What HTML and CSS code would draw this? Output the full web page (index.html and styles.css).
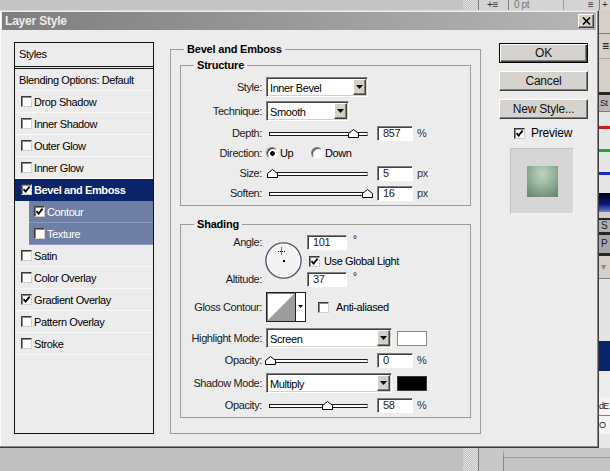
FILE: index.html
```html
<!DOCTYPE html>
<html lang="en">
<head>
<meta charset="utf-8">
<title>Layer Style</title>
<link rel="stylesheet" href="styles.css">
</head>
<body>
<div class="screen">
  <div class="topstrip">
    <div class="ts-left"></div>
    <div class="ts-hatch"></div>
    <div class="ts-right">
      <span class="ts-ic">+≡</span>
      <span class="ts-field">0 pt</span>
      <span class="ts-ic2">≡</span>
      <span class="ts-plus">+</span>
    </div>
  </div>

  <div class="middle">
    <div class="dialog">
      <div class="titlebar">
        <span class="title">Layer Style</span>
        <span class="close"><svg width="9" height="8" viewBox="0 0 9 8"><path d="M1 0.5 L8 7.5 M8 0.5 L1 7.5" stroke="#000" stroke-width="1.6"/></svg></span>
      </div>

      <div class="dbody">
        <div class="stylelist">
          <div class="sl-head">Styles</div>
          <div class="sl-row plain">Blending Options: Default</div>
          <div class="sl-row"><span class="cb"></span>Drop Shadow</div>
          <div class="sl-row"><span class="cb"></span>Inner Shadow</div>
          <div class="sl-row"><span class="cb"></span>Outer Glow</div>
          <div class="sl-row"><span class="cb"></span>Inner Glow</div>
          <div class="sl-row selected"><span class="cb"><svg viewBox="0 0 9 9"><polyline points="1.5,4.2 3.6,6.6 7.6,1.6" fill="none" stroke="#000" stroke-width="1.8"/></svg></span>Bevel and Emboss</div>
          <div class="sl-row sub"><span class="cb"><svg viewBox="0 0 9 9"><polyline points="1.5,4.2 3.6,6.6 7.6,1.6" fill="none" stroke="#000" stroke-width="1.8"/></svg></span>Contour</div>
          <div class="sl-row sub"><span class="cb"></span>Texture</div>
          <div class="sl-row"><span class="cb"></span>Satin</div>
          <div class="sl-row"><span class="cb"></span>Color Overlay</div>
          <div class="sl-row"><span class="cb"><svg viewBox="0 0 9 9"><polyline points="1.5,4.2 3.6,6.6 7.6,1.6" fill="none" stroke="#000" stroke-width="1.8"/></svg></span>Gradient Overlay</div>
          <div class="sl-row"><span class="cb"></span>Pattern Overlay</div>
          <div class="sl-row"><span class="cb"></span>Stroke</div>
        </div>

        <fieldset class="outer">
          <legend>Bevel and Emboss</legend>

          <fieldset class="inner structure">
            <legend>Structure</legend>
            <div class="rows">
              <div class="row r20">
                <span class="lbl">Style:</span>
                <div class="select w-style"><span class="sel-text">Inner Bevel</span><span class="arrow"><svg width="7" height="4" viewBox="0 0 7 4"><polygon points="0,0 7,0 3.5,4" fill="#000"/></svg></span></div>
              </div>
              <div class="row r20">
                <span class="lbl">Technique:</span>
                <div class="select w-tech"><span class="sel-text">Smooth</span><span class="arrow"><svg width="7" height="4" viewBox="0 0 7 4"><polygon points="0,0 7,0 3.5,4" fill="#000"/></svg></span></div>
              </div>
              <div class="row r16">
                <span class="lbl">Depth:</span>
                <div class="slider"><div class="track"></div><svg class="thumb" style="left:82px" width="11" height="9" viewBox="0 0 11 9"><polygon points="0.5,8.5 0.5,4.5 5.5,0.5 10.5,4.5 10.5,8.5" fill="#fff" stroke="#000"/></svg></div>
                <span class="num">857</span><span class="unit">%</span>
              </div>
              <div class="row r16">
                <span class="lbl">Direction:</span>
                <span class="opt opt-up"><span class="radio on"></span>Up</span>
                <span class="opt"><span class="radio"></span>Down</span>
              </div>
              <div class="row r16">
                <span class="lbl">Size:</span>
                <div class="slider"><div class="track"></div><svg class="thumb" style="left:1px" width="11" height="9" viewBox="0 0 11 9"><polygon points="0.5,8.5 0.5,4.5 5.5,0.5 10.5,4.5 10.5,8.5" fill="#fff" stroke="#000"/></svg></div>
                <span class="num">5</span><span class="unit">px</span>
              </div>
              <div class="row r16">
                <span class="lbl">Soften:</span>
                <div class="slider"><div class="track"></div><svg class="thumb" style="left:96px" width="11" height="9" viewBox="0 0 11 9"><polygon points="0.5,8.5 0.5,4.5 5.5,0.5 10.5,4.5 10.5,8.5" fill="#fff" stroke="#000"/></svg></div>
                <span class="num">16</span><span class="unit">px</span>
              </div>
            </div>
          </fieldset>

          <fieldset class="inner shading">
            <legend>Shading</legend>
            <div class="angle-block">
              <div class="lblcol"><span>Angle:</span><span>Altitude:</span></div>
              <svg class="dial" width="37" height="37" viewBox="0 0 37 37">
                <circle cx="18.5" cy="18.5" r="17.6" fill="#f3f3f3" stroke="#4d5a6b" stroke-width="1.4"/>
                <circle cx="18.5" cy="18.5" r="16.2" fill="none" stroke="#ffffff" stroke-width="1"/>
                <g stroke="#000" stroke-width="1" stroke-dasharray="1 1">
                  <line x1="16.5" y1="5.5" x2="16.5" y2="12.5"/>
                  <line x1="13" y1="9.5" x2="20" y2="9.5"/>
                </g>
                <rect x="18" y="18" width="2" height="2" fill="#000"/>
              </svg>
              <div class="anglecol">
                <div class="arow"><span class="num w40">101</span><span class="deg">°</span></div>
                <div class="arow grow"><span class="cb gl"><svg viewBox="0 0 9 9"><polyline points="1.5,4.2 3.6,6.6 7.6,1.6" fill="none" stroke="#000" stroke-width="1.8"/></svg></span>Use Global Light</div>
                <div class="arow"><span class="num w40">37</span><span class="deg">°</span></div>
              </div>
            </div>

            <div class="row r30 mt5">
              <span class="lbl">Gloss Contour:</span>
              <svg class="contour" width="40" height="30" viewBox="0 0 40 30">
                <rect x="0" y="0" width="40" height="30" fill="#fff"/>
                <polygon points="1,29 29,1 29,29" fill="#9c9c9c"/>
                <rect x="0.5" y="0.5" width="39" height="29" fill="none" stroke="#1e1e1e"/>
                <line x1="1" y1="1.5" x2="29" y2="1.5" stroke="#808080"/>
                <line x1="1.5" y1="1" x2="1.5" y2="29" stroke="#808080"/>
                <line x1="29.5" y1="0" x2="29.5" y2="30" stroke="#1e1e1e"/>
                <polygon points="32,13 37,13 34.5,16" fill="#000"/>
              </svg>
              <span class="cb aa"></span><span>Anti-aliased</span>
            </div>

            <div class="row r20 mt6">
              <span class="lbl">Highlight Mode:</span>
              <div class="select w-mode"><span class="sel-text">Screen</span><span class="arrow"><svg width="7" height="4" viewBox="0 0 7 4"><polygon points="0,0 7,0 3.5,4" fill="#000"/></svg></span></div>
              <span class="swatch white"></span>
            </div>
            <div class="row r16 mt4">
              <span class="lbl">Opacity:</span>
              <div class="slider"><div class="track"></div><svg class="thumb" style="left:-1px" width="11" height="9" viewBox="0 0 11 9"><polygon points="0.5,8.5 0.5,4.5 5.5,0.5 10.5,4.5 10.5,8.5" fill="#fff" stroke="#000"/></svg></div>
              <span class="num">0</span><span class="unit">%</span>
            </div>
            <div class="row r20 mt5">
              <span class="lbl">Shadow Mode:</span>
              <div class="select w-mode"><span class="sel-text">Multiply</span><span class="arrow"><svg width="7" height="4" viewBox="0 0 7 4"><polygon points="0,0 7,0 3.5,4" fill="#000"/></svg></span></div>
              <span class="swatch black"></span>
            </div>
            <div class="row r16 mt4">
              <span class="lbl">Opacity:</span>
              <div class="slider"><div class="track"></div><svg class="thumb" style="left:56px" width="11" height="9" viewBox="0 0 11 9"><polygon points="0.5,8.5 0.5,4.5 5.5,0.5 10.5,4.5 10.5,8.5" fill="#fff" stroke="#000"/></svg></div>
              <span class="num">58</span><span class="unit">%</span>
            </div>
          </fieldset>
        </fieldset>

        <div class="actions">
          <div class="btn default">OK</div>
          <div class="btn">Cancel</div>
          <div class="btn">New Style...</div>
          <div class="preview-row"><span class="cb pv"><svg viewBox="0 0 9 9"><polyline points="1.5,4.2 3.6,6.6 7.6,1.6" fill="none" stroke="#000" stroke-width="1.8"/></svg></span>Preview</div>
          <div class="preview-box"><div class="preview-sq"></div></div>
        </div>
      </div>
    </div>

    <div class="sidestrip">
      <div class="ss b23"></div>
      <div class="ss line"></div>
      <div class="ss b24 ic">≡</div>
      <div class="ss line2"></div>
      <div class="ss b33"></div>
      <div class="ss dark3"></div>
      <div class="ss tab16">St</div>
      <div class="ss line"></div>
      <div class="ss b14"></div>
      <div class="ss red"></div>
      <div class="ss b20"></div>
      <div class="ss green"></div>
      <div class="ss b20"></div>
      <div class="ss blue"></div>
      <div class="ss b18"></div>
      <div class="ss grad"></div>
      <div class="ss b6"></div>
      <div class="ss dark2"></div>
      <div class="ss tab12">S</div>
      <div class="ss dark3"></div>
      <div class="ss tab18">P</div>
      <div class="ss dark3"></div>
      <div class="ss b22 dd">▾</div>
      <div class="ss line"></div>
      <div class="ss b62"></div>
      <div class="ss navy"></div>
      <div class="ss b26"></div>
      <div class="ss txt">dE</div>
      <div class="ss line"></div>
      <div class="ss txt">O</div>
      <div class="ss rest"></div>
    </div>
  </div>

  <div class="bottomstrip">
    <div class="bs-left"></div>
    <div class="bs-hatch"></div>
    <div class="bs-mid"></div>
    <div class="bs-right"></div>
  </div>
</div>
</body>
</html>
```

FILE: styles.css
```css
* { box-sizing: border-box; }
html, body { margin: 0; padding: 0; }
body {
  width: 610px;
  height: 471px;
  overflow: hidden;
  background: #c0c0c0;
  font-family: "Liberation Sans", Arial, sans-serif;
  font-size: 11px;
  letter-spacing: -0.4px;
  color: #000;
}
.screen { width: 610px; height: 471px; display: flex; flex-direction: column; }

/* top strip */
.topstrip { height: 10px; display: flex; background: #c4c4c4; overflow: hidden; flex: none; }
.ts-left { width: 463px; }
.ts-hatch {
  width: 15px;
  background: repeating-conic-gradient(#e6e6e6 0 25%, #bdbdbd 0 50%) 0 0 / 2px 2px;
}
.ts-right {
  flex: 1; display: flex; align-items: flex-start; background: #d4d4d4;
  border-left: 1px solid #7a7a7a; font-size: 10px; line-height: 9px; color: #333;
}
.ts-ic { margin-left: 8px; width: 22px; border-right: 1px solid #808080; height: 10px; }
.ts-field { margin-left: 5px; width: 50px; color: #777; border-right: 1px solid #a0a0a0; height: 10px; }
.ts-ic2 { margin-left: 24px; width: 12px; border-right: 1px solid #808080; height: 10px; }
.ts-plus { margin-left: 2px; }

/* middle */
.middle { height: 438px; display: flex; flex: none; }
.dialog {
  width: 599px;
  height: 438px;
  display: flex;
  flex-direction: column;
  background: #ececec;
  border-top: 1px solid #dcdcdc;
  border-right: 1px solid #3c3c3c;
  border-bottom: 1px solid #3c3c3c;
  box-shadow: inset -1px -1px 0 #8a8a8a, inset 1px 0 0 #ffffff;
}
.titlebar {
  height: 18px;
  margin: 1px 2px 0 2px;
  background: linear-gradient(to right, #7e7e7e, #9a9a9a 50%, #b6b6b6);
  display: flex;
  align-items: center;
  justify-content: space-between;
  flex: none;
}
.title {
  color: #ececec;
  font-weight: bold;
  font-size: 12px;
  letter-spacing: -0.2px;
  margin-left: 3px;
}
.close {
  width: 16px; height: 14px; margin-right: 2px;
  background: #d4d0c8;
  border: 1px solid; border-color: #ffffff #404040 #404040 #ffffff;
  box-shadow: inset -1px -1px 0 #808080;
  display: flex; align-items: center; justify-content: center;
}
.close svg { display: block; }

.dbody {
  flex: 1;
  display: flex;
  align-items: stretch;
  padding: 12px 0 13px 14px;
}

/* style list */
.stylelist {
  width: 140px;
  flex: none;
  border: 1px solid #141414;
  background: #ececec;
}
.sl-head {
  height: 26px;
  padding: 0 0 0 4px;
  line-height: 23px;
  border-bottom: 3px double #141414;
}
.sl-row {
  height: 22px;
  display: flex;
  align-items: center;
  padding-left: 6px;
  border-bottom: 1px solid #f9f9f9;
  white-space: nowrap;
}
.sl-row.plain { padding-left: 4px; }
.sl-row.selected { background: #0a246a; color: #fff; font-weight: bold; border-bottom-color: #0a246a; }
.sl-row.sub { margin-left: 14px; padding-left: 5px; background: #6e7fa6; color: #fff; border-bottom-color: #8d9bbb; }

.cb {
  width: 11px; height: 11px; flex: none;
  background: #fff;
  border: 1px solid; border-color: #3a3a3a #d4d0c8 #d4d0c8 #3a3a3a;
  box-shadow: inset 1px 1px 0 #8a8a8a;
  margin-right: 2px;
  display: inline-flex; align-items: center; justify-content: center;
}
.cb svg { width: 9px; height: 9px; display: block; }

/* fieldsets */
fieldset { margin: 0; padding: 0; border: 1px solid #9c9c9c; min-width: 0; }
legend {
  padding: 0 3px;
  margin-left: 13px;
  font-weight: bold;
  line-height: 14px;
  letter-spacing: -0.2px;
}
.outer { width: 311px; flex: none; margin-left: 16px; }
.inner { margin: 2px 9px 0 9px; }
.structure { padding: 5px 0 4px 0; }
.shading { margin-top: 11px; padding: 4px 0 4px 0; }

.rows { display: flex; flex-direction: column; gap: 4px; }
.row { display: flex; align-items: center; white-space: nowrap; }
.r20 { height: 20px; }
.r16 { height: 16px; }
.r30 { height: 30px; }
.mt4 { margin-top: 4px; }
.mt5 { margin-top: 5px; }
.mt6 { margin-top: 6px; }

.lbl { width: 81px; flex: none; text-align: right; margin-right: 4px; color: #1a1a1a; }

/* select */
.select {
  height: 20px;
  display: flex; align-items: center; justify-content: space-between;
  background: #fff;
  border: 1px solid; border-color: #808080 #ffffff #ffffff #808080;
  box-shadow: inset 1px 1px 0 #404040, inset -1px -1px 0 #d4d0c8;
  flex: none;
}
.w-style { width: 102px; }
.w-tech { width: 83px; }
.w-mode { width: 126px; }
.sel-text { padding-left: 3px; margin-top: 2px; }
.arrow {
  width: 13px; height: 16px; margin-right: 1px;
  background: #d4d0c8;
  border: 1px solid; border-color: #ffffff #404040 #404040 #ffffff;
  box-shadow: inset -1px -1px 0 #808080;
  display: flex; align-items: center; justify-content: center;
}
.arrow svg { display: block; }

/* slider */
.slider { position: relative; width: 104px; height: 16px; flex: none; margin-right: 7px; display: flex; align-items: center; }
.track {
  margin-left: 3px; width: 99px; height: 4px;
  background: #fff;
  border: 1px solid #1c1c1c;
  border-right-color: #9a9a9a;
  margin-top: 1px;
}
.thumb { position: absolute; top: 4px; display: block; }

/* number field */
.num {
  width: 36px; height: 15px; flex: none;
  background: #fff;
  border: 1px solid; border-color: #808080 #ffffff #ffffff #808080;
  box-shadow: inset 1px 1px 0 #404040;
  padding-left: 5px;
  line-height: 13px;
  color: #222;
}
.num.w40 { width: 40px; }
.unit { margin-left: 4px; color: #333; }

/* radio */
.opt { display: inline-flex; align-items: center; }
.opt-up { width: 45px; }
.radio {
  width: 12px; height: 12px; border-radius: 50%; flex: none;
  background: #fff;
  border: 1px solid; border-color: #808080 #ffffff #ffffff #808080;
  box-shadow: inset 1px 1px 0 #404040;
  margin-right: 2px;
}
.radio.on { background: radial-gradient(circle at 55% 55%, #000 0 2px, #fff 2.6px); }

/* angle block */
.angle-block { display: flex; height: 52px; }
.lblcol {
  width: 81px; flex: none; margin-right: 3px;
  display: flex; flex-direction: column; justify-content: space-between; align-items: flex-end;
  line-height: 15px; color: #1a1a1a;
}
.dial { margin-top: 7px; margin-right: 5px; flex: none; display: block; }
.anglecol { display: flex; flex-direction: column; gap: 3px; }
.arow { display: flex; align-items: center; height: 15px; white-space: nowrap; }
.arow.grow { height: 16px; }
.deg { margin-left: 6px; align-self: flex-start; font-size: 10px; line-height: 9px; }
.cb.gl { margin-left: 2px; margin-right: 4px; }

.contour { display: block; flex: none; }
.cb.aa { margin-left: 12px; margin-right: 7px; }

.swatch { width: 30px; height: 15px; margin-left: 5px; border: 1px solid #8a8a8a; flex: none; }
.swatch.white { background: #fff; }
.swatch.black { background: #000; border-color: #3a3a3a; }

/* actions */
.actions { width: 89px; flex: none; margin-left: 18px; padding-top: 1px; display: flex; flex-direction: column; }
.btn {
  height: 20px;
  margin-bottom: 8px;
  background: #d6d3ce;
  border: 1px solid; border-color: #ffffff #404040 #404040 #ffffff;
  box-shadow: inset -1px -1px 0 #808080;
  font-size: 12px;
  letter-spacing: -0.2px;
  display: flex; align-items: center; justify-content: center;
  color: #111;
}
.btn.default { border: 1px solid #000; box-shadow: inset 1px 1px 0 #fff, inset -1px -1px 0 #404040, inset -2px -2px 0 #808080; }
.preview-row {
  display: flex; align-items: center; height: 12px;
  padding-left: 15px; font-size: 12px; letter-spacing: -0.2px;
}
.cb.pv { margin-right: 6px; }
.preview-box {
  margin: 9px 0 0 11px;
  width: 64px; height: 66px;
  background: #d6d6d6;
  border: 1px solid; border-color: #c2c2c2 #f2f2f2 #f2f2f2 #c2c2c2;
  display: flex; align-items: center; justify-content: center;
}
.preview-sq {
  width: 31px; height: 31px;
  background: radial-gradient(ellipse 80% 90% at 50% 25%, #bcd6bd 0%, #9cb9a2 40%, #7c9886 75%, #68826f 100%);
}

/* side strip */
.sidestrip { width: 11px; flex: none; display: flex; flex-direction: column; background: #d4d0c8; overflow: hidden; font-size: 10px; line-height: 10px; white-space: nowrap; }
.ss { flex: none; }
.b23 { height: 23px; }
.b24 { height: 24px; }
.b33 { height: 33px; }
.b14 { height: 14px; background: #e6e6e6; }
.b20 { height: 20px; background: #e6e6e6; }
.b18 { height: 18px; background: #e6e6e6; }
.b6 { height: 6px; }
.b22 { height: 22px; }
.b62 { height: 62px; background: #e4e4e4; }
.b26 { height: 26px; background: #ececec; }
.line { height: 1px; background: #808080; }
.line2 { height: 1px; background: #a8a8a8; }
.dark3 { height: 3px; background: #262626; }
.dark2 { height: 2px; background: #262626; }
.ic { padding: 7px 0 0 3px; font-size: 12px; }
.tab16 { height: 16px; background: #b8b8b8; padding: 3px 0 0 1px; color: #222; font-size: 9px; letter-spacing: -0.6px; }
.tab12 { height: 12px; background: #b0b0b0; padding: 1px 0 0 2px; color: #222; }
.tab18 { height: 18px; background: #a8a8a8; padding: 4px 0 0 2px; color: #222; }
.red { height: 3px; background: #cc1a1a; }
.green { height: 3px; background: #22a82a; }
.blue { height: 3px; background: #1a2ac0; }
.grad { height: 19px; background: linear-gradient(to bottom, #000010, #0a1a80 60%, #7080d0); }
.dd { color: #888; padding: 6px 0 0 2px; }
.navy { height: 30px; background: #0a246a; }
.txt { height: 18px; background: #f4f4f4; padding: 4px 0 0 0; color: #222; font-size: 9px; letter-spacing: -0.8px; }
.rest { flex: 1; background: #e8e8e8; }

/* bottom strip */
.bottomstrip { flex: 1; display: flex; background: #c0c0c0; }
.bs-left { width: 463px; }
.bs-hatch { width: 15px; background: repeating-conic-gradient(#e6e6e6 0 25%, #bdbdbd 0 50%) 0 0 / 2px 2px; }
.bs-mid { width: 25px; border-left: 1px solid #7a7a7a; background: #c8c8c8; }
.bs-right { flex: 1; border-left: 1px solid #8a8a8a; border-top: 9px solid #c8c8c8; background: #c4c4c4; box-shadow: inset 0 1px 0 #9a9a9a; }
```
